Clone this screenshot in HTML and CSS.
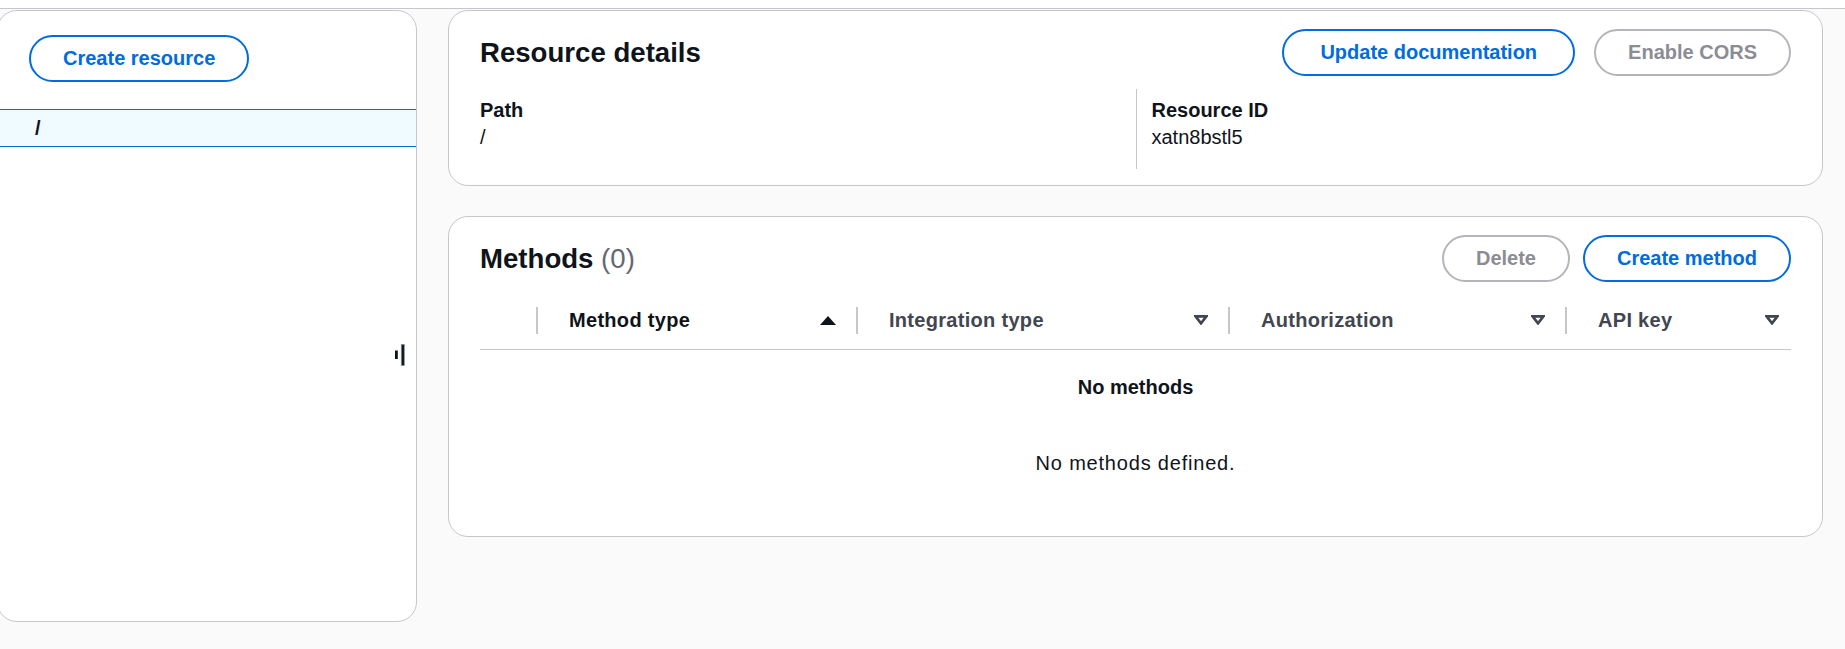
FILE: index.html
```html
<!DOCTYPE html>
<html lang="en">
<head>
<meta charset="utf-8">
<title>Resources</title>
<link rel="stylesheet" href="styles.css">
</head>
<body>
<div class="topbar"></div>
<div class="layout">
  <aside class="nav">
    <div class="nav-actions">
      <button class="btn">Create resource</button>
    </div>
    <div class="tree-row selected"><span class="tree-label">/</span></div>
    <div class="resize-handle" aria-hidden="true">
      <svg width="10" height="22" viewBox="0 0 10 22">
        <rect x="0" y="6.5" width="2.8" height="8.5" fill="#0f141a"/>
        <rect x="6.3" y="0.5" width="3" height="21" fill="#0f141a" stroke="#8c8c94" stroke-width="0.8"/>
      </svg>
    </div>
  </aside>

  <main class="content">
    <section class="panel">
      <header class="panel-header">
        <h2 class="panel-title">Resource details</h2>
        <div class="actions actions-wide">
          <button class="btn btn-doc">Update documentation</button>
          <button class="btn btn-disabled">Enable CORS</button>
        </div>
      </header>
      <div class="kv">
        <div class="kv-col">
          <div class="kv-label">Path</div>
          <div class="kv-value">/</div>
        </div>
        <div class="kv-col kv-divided">
          <div class="kv-label">Resource ID</div>
          <div class="kv-value">xatn8bstl5</div>
        </div>
      </div>
    </section>

    <section class="panel">
      <header class="panel-header">
        <h2 class="panel-title">Methods <span class="count">(0)</span></h2>
        <div class="actions actions-narrow">
          <button class="btn btn-disabled">Delete</button>
          <button class="btn">Create method</button>
        </div>
      </header>
      <div class="table">
        <div class="thead">
          <div class="th th-select"></div>
          <div class="th th-sorted">
            <span class="sep"></span>
            <span class="th-label">Method type</span>
            <svg class="sort" width="16" height="9" viewBox="0 0 16 9"><polygon points="0,9 8,0 16,9" fill="#0f141a"/></svg>
          </div>
          <div class="th">
            <span class="sep"></span>
            <span class="th-label">Integration type</span>
            <svg class="sort" width="14" height="10" viewBox="0 0 14 10"><polygon points="1.6,1.4 12.4,1.4 7,8.4" fill="none" stroke="#424650" stroke-width="2.6"/></svg>
          </div>
          <div class="th">
            <span class="sep"></span>
            <span class="th-label">Authorization</span>
            <svg class="sort" width="14" height="10" viewBox="0 0 14 10"><polygon points="1.6,1.4 12.4,1.4 7,8.4" fill="none" stroke="#424650" stroke-width="2.6"/></svg>
          </div>
          <div class="th th-last">
            <span class="sep"></span>
            <span class="th-label">API key</span>
            <svg class="sort" width="14" height="10" viewBox="0 0 14 10"><polygon points="1.6,1.4 12.4,1.4 7,8.4" fill="none" stroke="#424650" stroke-width="2.6"/></svg>
          </div>
        </div>
        <div class="empty">
          <div class="empty-title">No methods</div>
          <div class="empty-desc">No methods defined.</div>
        </div>
      </div>
    </section>
  </main>
</div>
</body>
</html>
```

FILE: styles.css
```css
* {
  box-sizing: border-box;
}

html, body {
  margin: 0;
  padding: 0;
}

body {
  background: #fafafa;
  font-family: "Liberation Sans", Arial, sans-serif;
  font-size: 20px;
  line-height: 27px;
  color: #0f141a;
  height: 649px;
  overflow: hidden;
}

.topbar {
  height: 9px;
  background: #ffffff;
  border-bottom: 1px solid #c6c6cd;
}

.layout {
  display: flex;
  gap: 31px;
  padding-top: 1px;
  margin-left: -3px;
  margin-right: 22px;
}

/* Navigation panel */
.nav {
  position: relative;
  flex: 0 0 420px;
  height: 612px;
  background: #ffffff;
  border: 1px solid #c6c6cd;
  border-radius: 20px;
  padding-top: 24px;
}

.nav-actions {
  padding-left: 31px;
}

.tree-row {
  margin-top: 27px;
  height: 38px;
  padding-left: 37px;
  display: flex;
  align-items: center;
  font-weight: bold;
}

.tree-row.selected {
  background: #f0fbff;
  border-top: 1px solid #006ce0;
  border-bottom: 1px solid #006ce0;
}

.resize-handle {
  position: absolute;
  right: 11px;
  top: 333px;
  width: 10px;
  height: 22px;
  line-height: 0;
}

/* Buttons */
.btn {
  height: 47px;
  padding: 0 32px;
  border: 2px solid #006ce0;
  border-radius: 24px;
  background: #ffffff;
  color: #006ce0;
  font-family: "Liberation Sans", Arial, sans-serif;
  font-size: 20px;
  font-weight: bold;
  line-height: 27px;
  cursor: pointer;
}

.btn-doc {
  padding: 0 36px;
}

.btn-disabled {
  border-color: #b4b4bb;
  color: #8c8c94;
  cursor: default;
}

/* Main content */
.content {
  flex: 1 1 auto;
  display: flex;
  flex-direction: column;
  gap: 30px;
}

.panel {
  background: #ffffff;
  border: 1px solid #c6c6cd;
  border-radius: 20px;
  padding: 18px 31px 16px 31px;
}

.panel-header {
  display: flex;
  align-items: center;
  justify-content: space-between;
  height: 47px;
}

.panel-title {
  margin: 0;
  font-size: 27.6px;
  line-height: 34px;
  font-weight: bold;
  color: #0f141a;
}

.count {
  font-weight: normal;
  color: #656871;
}

.actions {
  display: flex;
}

.actions-wide {
  gap: 19px;
}

.actions-narrow {
  gap: 13px;
}

/* Key-value */
.kv {
  margin-top: 13px;
  display: grid;
  grid-template-columns: 1fr 1fr;
}

.kv-col {
  padding: 8px 0 18px 0;
}

.kv-divided {
  border-left: 1px solid #c6c6cd;
  padding-left: 15px;
}

.kv-label {
  font-weight: bold;
}

/* Table */
.table {
  margin-top: 9px;
}

.thead {
  display: grid;
  grid-template-columns: 56px 320px 372px 337px 1fr;
  height: 59px;
  border-bottom: 1px solid #c6c6cd;
}

.th {
  display: flex;
  align-items: center;
  padding-right: 20px;
  font-weight: bold;
  color: #424650;
}

.th-sorted {
  color: #0f141a;
}

.th-last {
  padding-right: 12px;
}

.sep {
  flex: 0 0 2px;
  width: 2px;
  height: 27px;
  background: #c6c6cd;
}

.th-label {
  margin-left: 31px;
  letter-spacing: 0.3px;
}

.sort {
  margin-left: auto;
  flex: 0 0 auto;
}

.empty {
  text-align: center;
  padding: 24px 0 43px 0;
}

.empty-title {
  font-weight: bold;
}

.empty-desc {
  margin-top: 49px;
  letter-spacing: 0.8px;
}
```
